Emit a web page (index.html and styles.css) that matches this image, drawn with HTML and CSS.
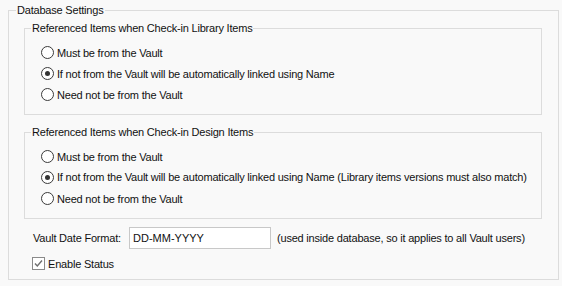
FILE: index.html
```html
<!DOCTYPE html>
<html>
<head>
  <meta charset="utf-8">
  <title>Database Settings</title>
  <link rel="stylesheet" href="styles.css">
</head>
<body>

  <fieldset class="group outer">
    <legend>Database Settings</legend>

    <fieldset class="group inner">
      <legend>Referenced Items when Check-in Library Items</legend>
      <label class="opt"><input type="radio" name="lib"> Must be from the Vault</label>
      <label class="opt"><input type="radio" name="lib" checked> If not from the Vault will be automatically linked using Name</label>
      <label class="opt"><input type="radio" name="lib"> Need not be from the Vault</label>
    </fieldset>

    <fieldset class="group inner second">
      <legend>Referenced Items when Check-in Design Items</legend>
      <label class="opt"><input type="radio" name="des"> Must be from the Vault</label>
      <label class="opt wide"><input type="radio" name="des" checked> <span class="cover">If not from the Vault will be automatically linked using Name (Library items versions must also match)</span></label>
      <label class="opt"><input type="radio" name="des"> Need not be from the Vault</label>
    </fieldset>

    <div class="date-row">
      <span class="date-label">Vault Date Format:</span>
      <input type="text" class="date-input" value="DD-MM-YYYY">
      <span class="note">(used inside database, so it applies to all Vault users)</span>
    </div>

    <label class="check-row">
      <span class="check">
        <svg width="11" height="11" viewBox="0 0 11 11"><path d="M2 5.5 L4.3 8 L9 2.5" fill="none" stroke="#6f6f6f" stroke-width="1.4"/></svg>
      </span>
      Enable Status
    </label>
  </fieldset>

</body>
</html>
```

FILE: styles.css
```css
body {
  margin: 0;
  background: #f9f9f9;
  font-family: "Liberation Sans", Arial, sans-serif;
  font-size: 11px;
  letter-spacing: -0.2px;
  color: #111;
}
.group {
  border: 1px solid #dcdcdc;
  margin: 0;
}
.group legend {
  padding: 0 1px;
  line-height: 13px;
}
.outer {
  margin: 4px 6px 0 8px;
  padding: 0 16px 8px 7px;
}
.inner {
  margin: 5px 0 0 8px;
  padding: 7px 0 9px 6px;
}
.second {
  margin-top: 11px;
}
.opt {
  display: flex;
  align-items: center;
  height: 21px;
  white-space: nowrap;
}
.opt input {
  appearance: none;
  -webkit-appearance: none;
  width: 13px;
  height: 13px;
  margin: 0 3px 0 10px;
  border: 1px solid #3a3a3a;
  border-radius: 50%;
  background: #fff;
  position: relative;
  flex: none;
}
.opt input:checked::after {
  content: "";
  position: absolute;
  left: 3px;
  top: 3px;
  width: 5px;
  height: 5px;
  border-radius: 50%;
  background: #333;
}
.cover {
  display: inline-block;
  width: 484px;
  line-height: 17px;
  background: #f9f9f9;
  position: relative;
}
.date-row {
  display: flex;
  align-items: center;
  margin: 8px 0 0 17px;
  height: 22px;
}
.date-label {
  width: 96px;
}
.date-input {
  box-sizing: border-box;
  width: 142px;
  height: 22px;
  margin: 0;
  padding: 0 3px;
  border: 1px solid #c8c8c8;
  background: #fff;
  font: inherit;
  color: #111;
}
.note {
  margin-left: 6px;
}
.check-row {
  display: flex;
  align-items: center;
  height: 15px;
  margin: 7px 0 0 16px;
}
.check {
  box-sizing: border-box;
  width: 13px;
  height: 13px;
  border: 1px solid #8a8a8a;
  background: #fff;
  margin-right: 3px;
  display: flex;
  align-items: center;
  justify-content: center;
}
.check svg {
  display: block;
}
```
